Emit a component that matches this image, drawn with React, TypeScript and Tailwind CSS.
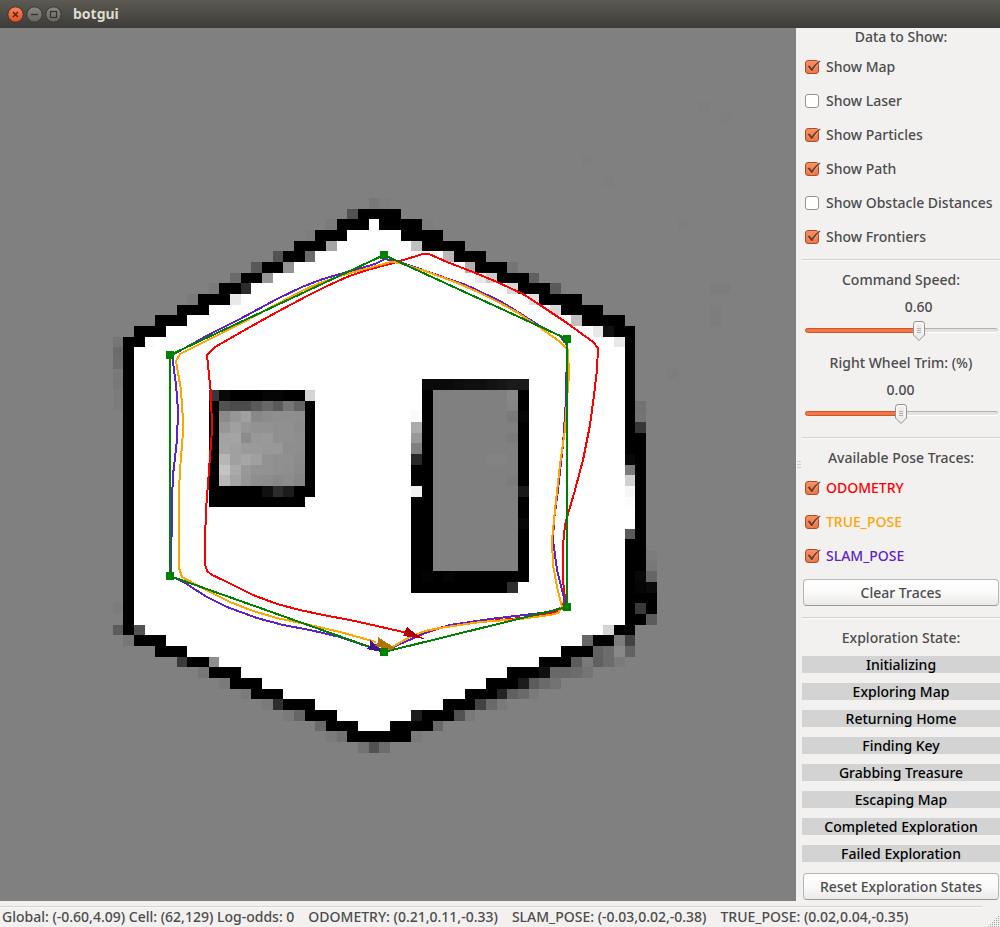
import { useId, useState } from "react";

const colX = (c: number) => Math.round(123.2 + (c * 32) / 3);
const rowY = (r: number) => Math.round(208.7 + (r * 32) / 3);

type Span = [row: number, from: number, to: number];
type Block = [col: number, row: number, colEnd: number, rowEnd: number, fill: string];
type Shade = [row: number, col: number, hex: string];

// Free space inside the outer wall, one span per grid row.
const freeSpans: Span[] = [
  [1, 20, 28], [2, 18, 30], [3, 16, 32], [4, 15, 34], [5, 13, 36], [6, 11, 38], [7, 9, 40],
  [8, 7, 43], [9, 5, 45], [10, 3, 47], [11, 1, 48],
  [40, 1, 46], [41, 3, 44], [42, 6, 42], [43, 8, 39], [44, 10, 37], [45, 12, 35],
  [46, 15, 33], [47, 17, 31], [48, 19, 29],
];

const wallSpans: Span[] = [
  [0, 22, 26], [1, 20, 23], [1, 24, 28], [2, 18, 21], [2, 26, 30], [3, 16, 19], [3, 28, 32],
  [4, 15, 17], [4, 31, 34], [5, 13, 15], [5, 33, 36], [6, 11, 13], [6, 35, 38], [7, 9, 11],
  [7, 37, 40], [8, 7, 10], [8, 39, 43], [9, 5, 8], [9, 41, 45], [10, 3, 6], [10, 43, 47],
  [11, 1, 4], [11, 46, 48], [12, 0, 2], [12, 47, 48],
  [39, 46, 48], [40, 1, 4], [40, 44, 46], [41, 3, 6], [41, 41, 44], [42, 6, 8], [42, 39, 42],
  [43, 8, 11], [43, 36, 39], [44, 10, 13], [44, 34, 37], [45, 12, 15], [45, 32, 35],
  [46, 15, 18], [46, 30, 33], [47, 17, 20], [47, 28, 31], [48, 19, 22], [48, 25, 29], [49, 21, 27],
];

const blocks: Block[] = [
  [0, 12, 48, 40, "#fff"],
  [0, 12, 1, 40, "#000"],
  [47, 12, 48, 24, "#000"],
  [47, 31, 48, 39, "#000"],
  [48, 21, 49, 39, "#000"],
  [49, 35, 50, 38, "#000"],
  [8, 17, 18, 27, "#000"],
  [8, 27, 17, 28, "#000"],
  [28, 16, 38, 35, "#000"],
  [27, 24, 28, 26, "#000"],
  [27, 27, 28, 35, "#000"],
  [27, 35, 36, 36, "#000"],
  [29, 17, 37, 34, "#808080"],
];

const shades: Shade[] = [
  [-1, 23, "78"], [-1, 24, "7d"], [0, 21, "52"], [1, 19, "7a"], [1, 28, "7d"], [2, 17, "7d"],
  [3, 19, "a6"], [3, 27, "c0"], [4, 14, "52"], [4, 17, "6a"], [4, 30, "b8"], [4, 29, "fe"],
  [5, 12, "58"], [5, 15, "93"], [5, 31, "fd"], [5, 32, "b0"], [5, 36, "74"],
  [6, 10, "6a"], [6, 13, "96"], [6, 33, "e8"], [6, 34, "cc"], [6, 38, "60"],
  [7, 8, "7a"], [7, 11, "2c"], [7, 35, "fa"], [7, 36, "d8"], [7, 40, "5a"],
  [8, 6, "7a"], [8, 10, "e8"], [8, 38, "e0"], [9, 40, "d8"], [10, 42, "c0"],
  [11, 44, "e8"], [11, 45, "10"], [12, -1, "76"], [12, 2, "fc"], [12, 46, "e8"],
  [13, -1, "6c"], [14, -1, "6e"], [15, -1, "7a"], [16, -1, "78"], [17, -1, "7c"], [18, -1, "7c"],
  [18, 48, "72"], [19, 48, "74"], [20, 48, "38"], [23, 47, "08"], [24, 47, "7c"], [25, 47, "d0"],
  [26, 47, "f6"], [27, 47, "fc"], [30, 47, "5a"], [32, 49, "7b"], [33, 49, "78"], [34, 49, "66"],
  [34, 48, "08"], [35, 48, "05"], [35, 49, "0a"], [37, 48, "3a"], [38, 49, "5c"],
  [37, -1, "7c"], [39, -1, "5c"], [39, 1, "52"], [39, 45, "d4"], [40, 0, "77"],
  [40, 43, "66"], [40, 46, "7c"], [40, 47, "42"],
  [41, 44, "62"], [41, 45, "6c"], [41, 46, "88"], [41, 47, "62"],
  [42, 5, "3a"], [42, 8, "8e"], [42, 42, "5c"], [42, 43, "7a"], [42, 44, "60"], [42, 45, "6c"], [42, 46, "7a"],
  [43, 7, "77"], [43, 39, "10"], [43, 40, "68"], [43, 41, "68"], [43, 42, "6c"], [43, 43, "74"],
  [44, 9, "7a"], [44, 37, "1c"], [44, 38, "5c"], [44, 39, "6a"], [44, 40, "72"],
  [45, 11, "7a"], [45, 35, "24"], [45, 36, "60"], [45, 37, "6a"], [45, 38, "7a"],
  [46, 13, "7a"], [46, 14, "2e"], [46, 33, "42"], [46, 34, "6a"], [46, 35, "7a"],
  [47, 15, "7a"], [47, 16, "66"], [47, 27, "1c"], [47, 31, "52"], [47, 32, "78"],
  [48, 18, "6a"], [48, 29, "68"], [49, 19, "7a"], [49, 20, "72"], [49, 27, "7a"],
  [50, 22, "72"], [50, 23, "52"], [50, 24, "6c"],
  [17, 8, "38"], [17, 9, "08"], [17, 13, "05"], [17, 14, "05"], [17, 17, "d4"],
  [26, 13, "10"], [26, 14, "2c"], [26, 15, "1c"],
  [16, 28, "0a"], [16, 29, "0a"], [16, 30, "0a"], [16, 31, "0d"], [16, 32, "0f"], [16, 33, "0f"],
  [16, 34, "12"], [16, 35, "16"], [16, 36, "1a"], [16, 37, "1a"],
  [17, 36, "88"], [18, 36, "84"], [19, 36, "7a"], [21, 36, "7b"], [25, 36, "7c"], [23, 35, "83"], [23, 34, "83"],
  [19, 27, "fa"], [20, 27, "aa"], [21, 27, "98"], [22, 27, "80"], [23, 27, "28"], [26, 27, "f0"],
  [19, 37, "05"], [26, 37, "18"], [29, 37, "07"], [34, 28, "03"], [34, 30, "04"], [35, 36, "2e"],
  [7, 55, "7d"], [7, 56, "7d"], [9, 55, "7d"], [10, 55, "7d"], [15, 51, "7d"],
  [1, 52, "7e"], [-9, 56, "7e"], [-10, 54, "7e"], [-3, 45, "7e"], [-5, 43, "7e"],
];

// Occupancy of the half-seen region in the left obstacle, from row 18 and column 9.
const obstacle = [
  "52 4c 4c 5a 68 5a 76 64",
  "8a 96 a0 88 8c 8e 8e 8e",
  "96 a0 96 92 92 90 90 8c",
  "a2 a4 8c 98 9a 90 90 8e",
  "a4 a0 9a 9a 98 98 8e 8e",
  "b6 a0 a6 a0 92 90 90 8c",
  "c4 aa 98 92 92 90 8e 8a",
  "b8 a4 96 8e 8c 88 8c 86",
].map((line) => line.split(" "));

const grey = (h: string) => `#${h}${h}${h}`;

function Cells({ c, r, c2 = c + 1, r2 = r + 1, fill }: { c: number; r: number; c2?: number; r2?: number; fill: string }) {
  return <rect x={colX(c)} y={rowY(r)} width={colX(c2) - colX(c)} height={rowY(r2) - rowY(r)} fill={fill} />;
}

const waypoints: [number, number][] = [[384, 255], [170, 355], [170, 576], [384, 652], [567, 607], [567, 339]];

type Layers = { map: boolean; path: boolean; odometry: boolean; truePose: boolean; slam: boolean };

function MapCanvas({ map, path, odometry, truePose, slam }: Layers) {
  return (
    <svg viewBox="0 28 796 873" className="block w-full" shapeRendering="crispEdges" role="img" aria-label="Occupancy map">
      {map && (
        <g>
          {freeSpans.map(([r, a, b], i) => <Cells key={i} c={a} c2={b} r={r} fill="#fff" />)}
          {blocks.map(([c, r, c2, r2, f], i) => <Cells key={i} c={c} r={r} c2={c2} r2={r2} fill={f} />)}
          {wallSpans.map(([r, a, b], i) => <Cells key={i} c={a} c2={b} r={r} fill="#000" />)}
          {shades.map(([r, c, h], i) => <Cells key={i} c={c} r={r} fill={grey(h)} />)}
          {obstacle.map((line, r) => line.map((h, c) => <Cells key={`${r}-${c}`} c={c + 9} r={r + 18} fill={grey(h)} />))}
        </g>
      )}
      <g fill="none" strokeWidth="2" strokeLinejoin="round">
        {odometry && (
          <path stroke="#f00" d="M388 650L400 644L420 635L440 628L470 623L520 618L550 614L562 609L565 598L563 580V545L565 525L568 514L575 490L583 460L590 425L594 395L597 370L598 348L593 342L567 323L540 305L523 294L497 282L473 272L447 262L429 254H423L390 264L367 270L347 277L327 286L307 296L277 312L250 327L215 347L207 355L209 375L211 393L212 430L209 470L206 510L205 540V564L207 571L212 575L223 580L253 595L277 604L300 610L323 615L350 620L377 626L412 634" />
        )}
        {slam && (
          <path stroke="#5e22cc" d="M384 652L400 644L430 631L450 625L490 619L550 612L566 606L562 590L557 570L553 540L554 520L558 490L563 445L566 400L567 345L560 336L540 326L518 312L500 301L466 285L440 276L400 262L385 259L375 264L340 274L320 280L302 287L277 299L240 319L210 334L185 348L172 355L176 385L178 410L177 440L173 475L172 500L171 576L185 583L207 597L227 607L257 618L283 625L310 630L340 637L363 645L370 647" />
        )}
        {truePose && (
          <path stroke="#ffa500" d="M384 652L394 646L410 637L425 631L440 628L480 622L520 619L550 615L558 613L562 607L557 587L553 565L552 540L555 510L560 465L565 430L567 400L569 375L568 350L560 342L545 331L520 314L500 303L478 292L455 282L425 271L400 263L391 262L343 275L317 284L300 292L277 304L240 324L200 344L180 354L176 361L181 390L183 420V432L180 470L179 490V568L182 577L193 583L210 592L230 602L253 611L277 618L310 625L340 632L376 642" />
        )}
        {path && <polygon stroke="#008000" points={waypoints.map((p) => p.join(",")).join(" ")} />}
      </g>
      {odometry && <polygon points="407,627 416,634 425,639 403,636" fill="#b20000" />}
      {slam && <polygon points="370,640 386,653 366,649 370,645" fill="#41178e" />}
      {truePose && <polygon points="378,637 395,648 391,650 375,646 378,642" fill="#b27300" />}
      {path && waypoints.map(([x, y]) => <rect key={`${x}-${y}`} x={x - 4} y={y - 4} width="8" height="8" fill="#008000" />)}
    </svg>
  );
}

function Check({ label, color = "text-[#4c4c4c]", checked, onChange }: { label: string; color?: string; checked: boolean; onChange: (v: boolean) => void }) {
  return (
    <label className={`flex h-[34px] items-center gap-1 pl-[2px] whitespace-nowrap ${color}`}>
      <span className="relative block size-[18px] shrink-0">
        <input
          type="checkbox"
          checked={checked}
          onChange={(e) => onChange(e.target.checked)}
          className="peer absolute top-[2px] left-[1px] size-[14px] appearance-none rounded-[3px] border border-[#96928d] bg-white checked:border-[#a84e2d] checked:bg-linear-to-b checked:from-[#fb8f64] checked:to-[#ee7443]"
        />
        <svg viewBox="0 0 18 18" className="pointer-events-none absolute inset-0 hidden size-[18px] peer-checked:block">
          <path d="M4.3 9L7.6 12.3L14.5 4" fill="none" stroke="#ffb595" strokeWidth="3.4" opacity=".4" />
          <path d="M3.6 8.3L5.6 7.5L7.7 10.3C9.8 7.2 12.4 4.6 16 2.4L16.5 3.2C13.2 5.8 10.6 9 8.4 13H7.1Z" fill="#6b402f" />
        </svg>
      </span>
      {label}
    </label>
  );
}

function Slider({ label, min, max, step, initial }: { label: string; min: number; max: number; step: number; initial: number }) {
  const id = useId();
  const [value, setValue] = useState(initial);
  const ratio = (value - min) / (max - min);
  const left = `calc(5px + (100% - 12px) * ${ratio})`;
  return (
    <div>
      <label htmlFor={id} className="block text-center">{label}</label>
      <div className="relative mr-[2px] ml-[3px] h-[62px]">
        <output htmlFor={id} className="absolute top-[9px] -translate-x-1/2" style={{ left }}>{value.toFixed(2)}</output>
        <div className="absolute inset-x-0 top-[39px] h-[5px] rounded-full border-t border-[#b5b2ad] border-b border-b-white bg-[#e3e2e0]" />
        <div className="absolute top-[39px] left-0 h-[5px] rounded-full border border-[#d0562a] bg-[#f07746]" style={{ width: left }} />
        <svg viewBox="0 0 14 22" className="absolute top-[31px] h-[22px] w-[14px] -translate-x-1/2" style={{ left }}>
          <path d="M4 1.5H10Q12.5 1.5 12.5 4.5V15L7 20.5L1.5 15V4.5Q1.5 1.5 4 1.5Z" fill="#eeedeb" stroke="#96938e" />
          <path d="M3 14V4Q3 3 4 3H10Q11 3 11 4V14" fill="none" stroke="#fff" />
          <path d="M5 8.5H9M5 10.5H9M5 12.5H9" stroke="#b0aeaa" />
        </svg>
        <input
          id={id}
          type="range"
          min={min}
          max={max}
          step={step}
          value={value}
          onChange={(e) => setValue(Number(e.target.value))}
          className="absolute inset-x-0 top-[31px] h-5 w-full opacity-0"
        />
      </div>
    </div>
  );
}

const Divider = () => <hr className="h-[2px] border-t border-b border-t-[#d4d3d1] border-b-[#fafafa]" />;

function PushButton({ children, onClick }: { children: string; onClick?: () => void }) {
  return (
    <button
      type="button"
      onClick={onClick}
      className="mr-px ml-px block h-[27px] rounded-[4px] border border-[#b9b6b1] border-b-[#9c9995] bg-linear-to-b from-white via-[#fafafa] to-[#ebeae9] text-center leading-[25px] whitespace-nowrap"
    >
      {children}
    </button>
  );
}

const states = ["Initializing", "Exploring Map", "Returning Home", "Finding Key", "Grabbing Treasure", "Escaping Map", "Completed Exploration", "Failed Exploration"];

export default function App() {
  const [on, setOn] = useState<Record<string, boolean>>({
    "Show Map": true,
    "Show Laser": false,
    "Show Particles": true,
    "Show Path": true,
    "Show Obstacle Distances": false,
    "Show Frontiers": true,
    ODOMETRY: true,
    TRUE_POSE: true,
    SLAM_POSE: true,
  });
  const bind = (label: string) => ({ label, checked: on[label], onChange: (v: boolean) => setOn((s) => ({ ...s, [label]: v })) });

  return (
    <div className="flex min-h-screen flex-col bg-[#f2f1f0] font-['Noto_Sans','Open_Sans',sans-serif] text-[14px] leading-[18px] font-medium text-[#4c4c4c]">
      <header className="flex h-7 items-center bg-linear-to-b from-[#5c5a52] to-[#3d3c38] pl-[7px]">
        <svg viewBox="0 0 56 18" className="h-[18px] w-[56px]" aria-hidden="true">
          <defs>
            <linearGradient id="close" x2="0" y2="1"><stop stopColor="#f58763" /><stop offset="1" stopColor="#e2511c" /></linearGradient>
            <linearGradient id="btn" x2="0" y2="1"><stop stopColor="#8b8981" /><stop offset="1" stopColor="#66645d" /></linearGradient>
          </defs>
          <circle cx="8.5" cy="9.5" r="7.7" fill="url(#close)" stroke="#353430" />
          <circle cx="27.5" cy="9.5" r="7.7" fill="url(#btn)" stroke="#353430" />
          <circle cx="46.5" cy="9.5" r="7.7" fill="url(#btn)" stroke="#353430" />
          <path d="M6 7L11 12M11 7L6 12" stroke="#5a2413" strokeWidth="1.5" />
          <path d="M24 9.5H31" stroke="#33322e" strokeWidth="1.3" />
          <rect x="43.5" y="6.5" width="6" height="6" fill="none" stroke="#33322e" strokeWidth="1.2" />
        </svg>
        <h1 className="pl-[10px] text-[14px] font-bold text-[#dfdbd2]">botgui</h1>
      </header>

      <div className="flex flex-1">
        <main className="min-w-0 flex-1 bg-[#808080]">
          <MapCanvas map={on["Show Map"]} path={on["Show Path"]} odometry={on.ODOMETRY} truePose={on.TRUE_POSE} slam={on.SLAM_POSE} />
        </main>
        <div className="flex w-[6px] flex-col items-center justify-center gap-[2px] pr-[1px]" aria-hidden="true">
          <i className="h-px w-1 bg-[#d0cfcd]" />
          <i className="h-px w-1 bg-[#d0cfcd]" />
          <i className="h-px w-1 bg-[#d0cfcd]" />
        </div>
        <aside className="w-[198px] shrink-0">
          <h2 className="mb-1 text-center">Data to Show:</h2>
          <Check {...bind("Show Map")} />
          <Check {...bind("Show Laser")} />
          <Check {...bind("Show Particles")} />
          <Check {...bind("Show Path")} />
          <Check {...bind("Show Obstacle Distances")} />
          <Check {...bind("Show Frontiers")} />
          <div className="pt-[5px] pb-[10px]"><Divider /></div>
          <Slider label="Command Speed:" min={0} max={1} step={0.01} initial={0.6} />
          <div className="pt-[3px]">
            <Slider label="Right Wheel Trim: (%)" min={-10} max={10} step={0.01} initial={0} />
          </div>
          <div className="pt-[3px] pb-[10px]"><Divider /></div>
          <h2 className="mb-1 text-center">Available Pose Traces:</h2>
          <Check {...bind("ODOMETRY")} color="text-[#ff0000]" />
          <Check {...bind("TRUE_POSE")} color="text-[#ffa500]" />
          <Check {...bind("SLAM_POSE")} color="text-[#5e22cc]" />
          <div className="grid pt-[6px]">
            <PushButton onClick={() => setOn((s) => ({ ...s, ODOMETRY: false, TRUE_POSE: false, SLAM_POSE: false }))}>Clear Traces</PushButton>
          </div>
          <div className="pt-[11px] pb-[10px]"><Divider /></div>
          <h2 className="mb-[9px] text-center">Exploration State:</h2>
          <ul className="flex flex-col gap-[10px] text-center text-black">
            {states.map((s) => <li key={s} className="h-[17px] bg-[#d3d3d3] leading-[17px]">{s}</li>)}
          </ul>
          <div className="grid pt-[11px]"><PushButton>Reset Exploration States</PushButton></div>
        </aside>
      </div>

      <footer className="relative pt-[5px]">
        <div className="mr-[18px]"><Divider /></div>
        <p className="flex h-[19px] items-center gap-[14px] pb-[2px] pl-[2px] whitespace-nowrap">
          <span>Global: (-0.60,4.09) Cell: (62,129) Log-odds: 0</span>
          <span>ODOMETRY: (0.21,0.11,-0.33)</span>
          <span>SLAM_POSE: (-0.03,0.02,-0.38)</span>
          <span>TRUE_POSE: (0.02,0.04,-0.35)</span>
        </p>
        <svg viewBox="0 0 12 12" className="absolute right-0 bottom-0 size-3" aria-hidden="true">
          <path d="M10 1.5h1M8 3.5h3M6 5.5h5M4 7.5h7M2 9.5h9M0 11.5h11" stroke="#aaa8a5" strokeDasharray="1 1" shapeRendering="crispEdges" />
        </svg>
      </footer>
    </div>
  );
}
